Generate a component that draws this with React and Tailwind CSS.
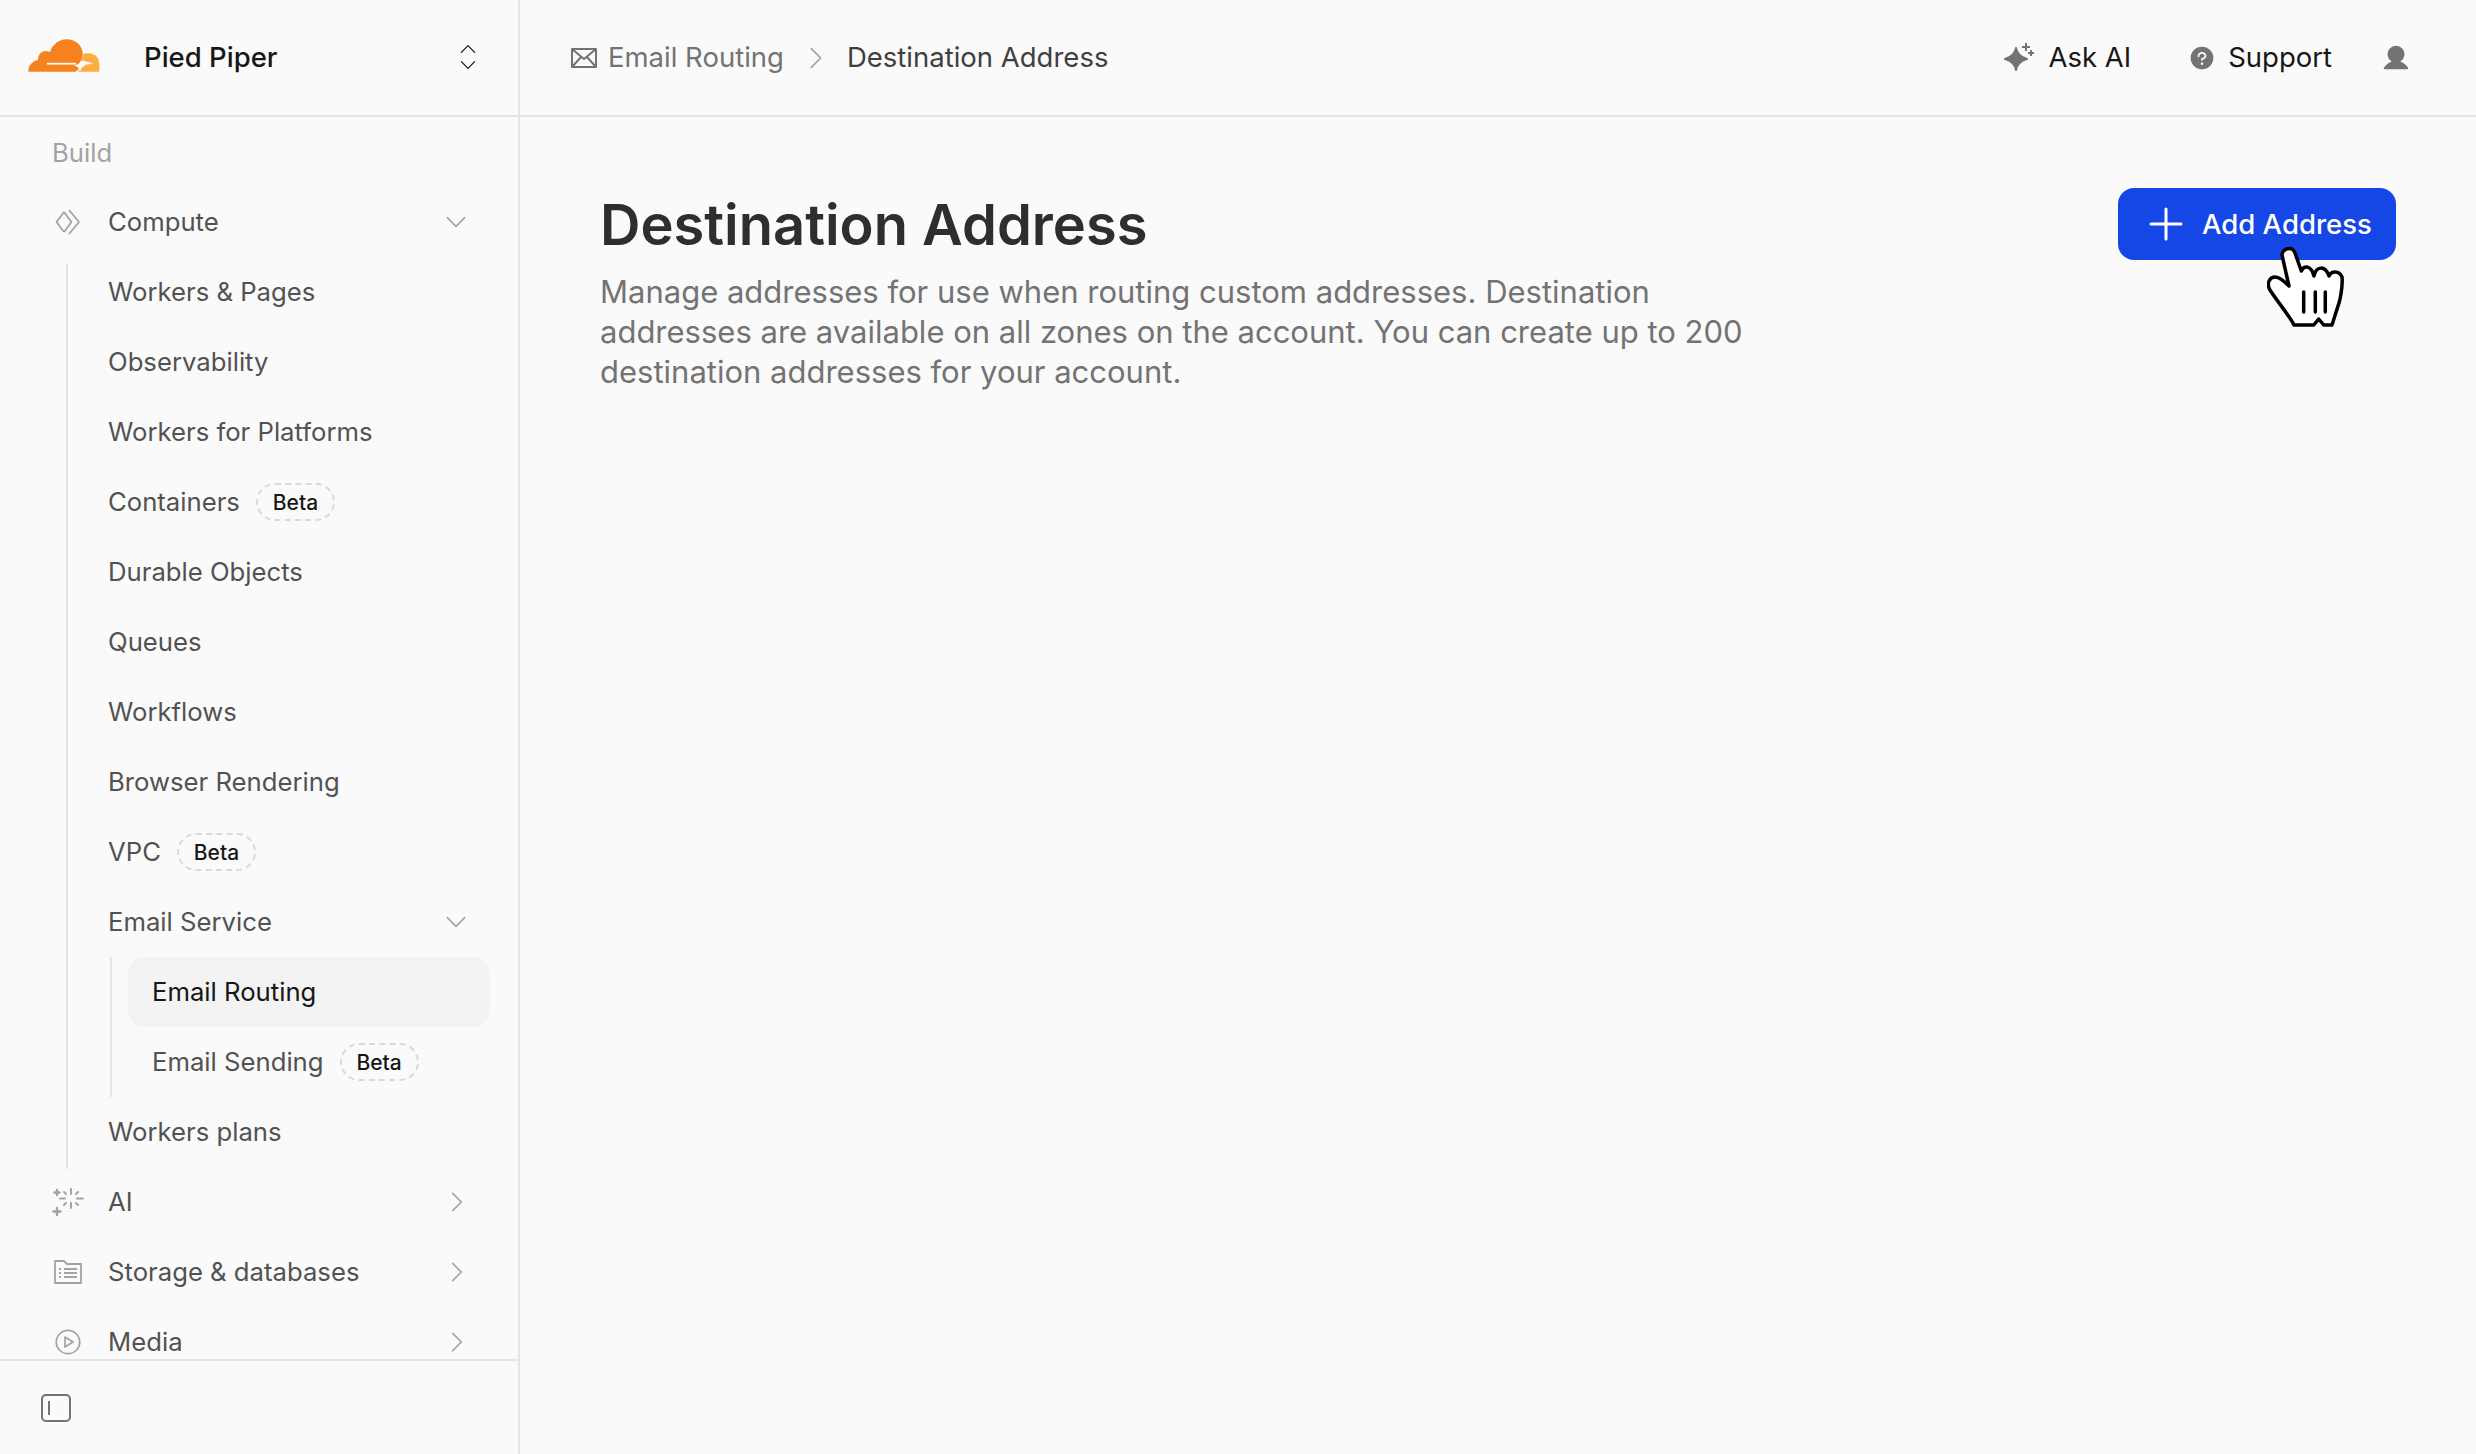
import React from "react";
import { PiQuestionFill, PiUserFill } from "react-icons/pi";

const CloudLogo = () => (
  <svg className="w-[72px] h-[33px] shrink-0 -mt-[5px]" viewBox="0 0 72 33">
    <path
      fill="#f6821f"
      d="M0.300 32.700C0.300 27 4 22 10 21C9.500 15 15 9.500 22 13C24.500 5.500 31 0.300 38.700 0.300C47 0.300 54 6 54.700 14C55 17 54.500 19 53.700 21L52 27L50 30.500C49 32 48 32.700 47 32.700z"
    />
    <path
      fill="#fbad41"
      d="M50.300 32.700C51 29 52 27 54.700 26.300C58 25.500 62 25.500 65 24.300C61 22.800 57 22.500 53.700 21.300C55 19 55.500 17 55.300 15.300C56 14.800 57 14.300 62 14.300C67 15 71.300 19 71.300 25V32.700z"
    />
    <path d="M19 24.700H48" stroke="#fafafa" strokeWidth="1.800" fill="none" />
    <path d="M53 20C53 24 55 26 58 26.500C55 27 53 29 52 33C51.500 29 50 27.500 46 26.500C50 26 52.500 24 53 20z" fill="#fafafa" />
  </svg>
);

const Caret = ({ dir = "down", className = "" }) => {
  const pts = {
    down: "4,8 12,16 20,8",
    right: "8,4 16,12 8,20",
    up: "4,16 12,8 20,16",
  };
  return (
    <svg className={className} viewBox="0 0 24 24" fill="none" stroke="currentColor" strokeWidth="1.500" strokeLinecap="round" strokeLinejoin="round">
      <polyline points={pts[dir]} />
    </svg>
  );
};

const ComputeIcon = () => (
  <svg className="w-[26px] h-[26px]" viewBox="0 0 26 26" fill="none" stroke="#a3a3a3" strokeWidth="1.800" strokeLinejoin="round">
    <path d="M9 3 L1.500 13 L9 23" />
    <path d="M9 3 L16.500 13 L9 23" />
    <path d="M14 1 L24 13 L14 25" />
  </svg>
);

const AiIcon = () => (
  <svg className="w-[32px] h-[28px]" viewBox="0 0 32 28" fill="none" stroke="#a3a3a3" strokeWidth="2" strokeLinecap="round">
    <path d="M19 1v5M19 15v5M8 10.500h5M25 10.500h6M12 4l2 2M24 15l2 2M26 4l-2 2M14 15l-2 2" />
    <path d="M5 2v5M2.500 4.500h5M5 20v7M1.500 23.500h7" strokeWidth="2.400" />
  </svg>
);

const StorageIcon = () => (
  <svg className="w-[28px] h-[24px]" viewBox="0 0 28 24" fill="none" stroke="#a3a3a3" strokeWidth="1.800" strokeLinejoin="round">
    <path d="M1 1h9l3 3h14v19H1z" />
    <path d="M5 9h2M10 9h13M5 13h2M10 13h13M5 17h2M10 17h13" />
  </svg>
);

const MediaIcon = () => (
  <svg className="w-[26px] h-[26px]" viewBox="0 0 26 26" fill="none" stroke="#a3a3a3" strokeWidth="1.700" strokeLinejoin="round">
    <circle cx="13" cy="13" r="11.700" />
    <path d="M10 8l8 5-8 5z" />
  </svg>
);

const Beta = () => (
  <span className="inline-flex items-center justify-center w-[79px] h-[38px] pt-[2px] rounded-full border-2 border-dashed border-[#d9d9d9] text-[21px] font-medium text-[#171717]">
    Beta
  </span>
);

const NavRow = ({ icon, label, beta, caret, indent = "pl-[108px]" }) => (
  <div className={`flex items-center h-[70px] shrink-0 ${indent} pr-[48px] gap-[16px] text-[#525252]`}>
    {icon && <span className="flex justify-center -ml-[64px] w-[48px]">{icon}</span>}
    <span>{label}</span>
    {beta && <Beta />}
    {caret && (
      <Caret
        dir={caret}
        className={`ml-auto w-[26px] h-[26px] text-[#a3a3a3] ${caret === "down" ? "mr-[1px]" : ""}`}
      />
    )}
  </div>
);

const SideBar = () => (
  <aside className="flex flex-col w-[520px] h-full shrink-0 border-r-2 border-[#e5e5e5] text-[25.7px]">
    <div className="flex items-center h-[117px] shrink-0 border-b-2 border-[#e5e5e5] pl-[28px] pr-[40px]">
      <CloudLogo />
      <span className="ml-[44px] text-[27.5px] text-[#171717] font-medium">Pied Piper</span>
      <div className="ml-auto flex flex-col -mt-[2px] text-[#171717]">
        <Caret dir="up" className="w-[20px] h-[20px] -mb-[4px]" />
        <Caret dir="down" className="w-[20px] h-[20px]" />
      </div>
    </div>
    <nav className="flex-1 overflow-hidden flex flex-col font-normal">
      <div className="flex items-center h-[70px] shrink-0 pl-[52px] pt-[2px] text-[#a3a3a3]">Build</div>
      <NavRow icon={<ComputeIcon />} label="Compute" caret="down" />
      <div className="ml-[66px] mt-[7px] border-l-2 border-[#e5e5e5] pb-[2px] -mb-[2px]">
        <div className="-mt-[7px]">
          <NavRow label="Workers & Pages" indent="pl-[40px]" />
          <NavRow label="Observability" indent="pl-[40px]" />
          <NavRow label="Workers for Platforms" indent="pl-[40px]" />
          <NavRow label="Containers" beta indent="pl-[40px]" />
          <NavRow label="Durable Objects" indent="pl-[40px]" />
          <NavRow label="Queues" indent="pl-[40px]" />
          <NavRow label="Workflows" indent="pl-[40px]" />
          <NavRow label="Browser Rendering" indent="pl-[40px]" />
          <NavRow label="VPC" beta indent="pl-[40px]" />
          <NavRow label="Email Service" caret="down" indent="pl-[40px]" />
          <div className="ml-[42px] border-l-2 border-[#e5e5e5] pl-[16px] pr-[28px]">
            <div className="flex items-center h-[70px] rounded-[16px] bg-[#f3f3f3] pl-[24px] text-[#171717]">Email Routing</div>
            <div className="flex items-center h-[70px] pl-[24px] gap-[16px] text-[#525252]">
              <span>Email Sending</span>
              <Beta />
            </div>
          </div>
          <NavRow label="Workers plans" indent="pl-[40px]" />
        </div>
      </div>
      <NavRow icon={<AiIcon />} label="AI" caret="right" />
      <NavRow icon={<StorageIcon />} label="Storage & databases" caret="right" />
      <NavRow icon={<MediaIcon />} label="Media" caret="right" />
    </nav>
    <div className="flex items-center h-[95px] shrink-0 border-t-2 border-[#e5e5e5] pl-[41px]">
      <svg className="w-[30px] h-[28px]" viewBox="0 0 30 28" fill="none" stroke="#737373" strokeWidth="2">
        <rect x="1" y="1" width="28" height="26" rx="4" />
        <path d="M8 7v14" />
      </svg>
    </div>
  </aside>
);

const Header = () => (
  <header className="flex items-center h-[117px] shrink-0 border-b-2 border-[#e5e5e5] pl-[51px] pr-[65px] text-[27.5px]">
    <svg className="w-[26px] h-[20px]" viewBox="0 0 26 20" fill="none" stroke="#737373" strokeWidth="2" strokeLinejoin="round">
      <rect x="1" y="1" width="24" height="18" />
      <path d="M1 1l12 10L25 1M1 19l9-10M25 19l-9-10" />
    </svg>
    <span className="ml-[11px] text-[#737373]">Email Routing</span>
    <Caret dir="right" className="ml-[18px] w-[28px] h-[28px] text-[#a3a3a3]" />
    <span className="ml-[17px] text-[#404040]">Destination Address</span>
    <div className="ml-auto flex items-center text-[#171717]">
      <svg className="w-[30px] h-[30px]" viewBox="0 0 30 30" fill="#737373">
        <path d="M12 5c1 6 4 9 11 11-7 2-10 5-11 11-1-6-4-9-11-11 7-2 10-5 11-11z" stroke="#737373" strokeWidth="2" strokeLinejoin="round" />
        <path d="M21 0h2v3h3v2h-3v3h-2V5h-3V3h3zM26 7h2v2h2v2h-2v2h-2v-2h-2V9h2z" />
      </svg>
      <span className="ml-[14px]">Ask AI</span>
      <PiQuestionFill className="ml-[57px] w-[28px] h-[28px] text-[#737373]" />
      <span className="ml-[12px]">Support</span>
      <PiUserFill className="ml-[49px] w-[30px] h-[30px] text-[#737373]" />
    </div>
  </header>
);

const HandCursor = () => (
  <svg className="absolute left-[149px] top-[58px] w-[78px] h-[83px]" viewBox="0 0 78 83">
    <path
      fill="#fff"
      stroke="#000"
      strokeWidth="3.500"
      strokeLinejoin="round"
      d="M15 9C15 3 25-1 28 7L34.300 25C37 19 44 19 47 30C49 20 58 19 62 30C64 25 72 24 75 31C76 40 73 55 71 60L65 79H56.700L51.700 73L46.700 79H27C24 72 10 55 3 44C-1 37 3 31 8 31C13 31 18 36 22 40z"
    />
    <path d="M36.700 46v20M48.300 46v20M58.300 46v20" stroke="#000" strokeWidth="3.500" strokeLinecap="round" fill="none" />
  </svg>
);

export default function App() {
  return (
    <div className="flex w-[2476px] h-[1454px] overflow-hidden bg-[#fafafa] font-['Inter',sans-serif]">
      <SideBar />
      <main className="flex flex-col flex-1 min-w-0">
        <Header />
        <div className="flex items-start justify-between pl-[80px] pr-[80px] pt-[71px]">
          <div>
            <h1 className="pt-[1px] mb-[11px] text-[56px] leading-[72px] font-semibold text-[#2e2e2e]">Destination Address</h1>
            <p className="w-[1180px] text-[31px] leading-[40px] text-[#737373]">
              Manage addresses for use when routing custom addresses. Destination addresses are available on all zones on the account. You can create up to 200 destination addresses for your account.
            </p>
          </div>
          <div className="relative">
            <button className="flex items-center w-[278px] h-[72px] rounded-[16px] bg-[#1447e6] pl-[31px] text-[27.5px] font-medium text-white">
              <svg className="w-[34px] h-[34px] shrink-0" viewBox="0 0 34 34" fill="none" stroke="#fff" strokeWidth="3" strokeLinecap="round">
                <path d="M17 2v30M2 17h30" />
              </svg>
              <span className="ml-[19px] pt-[1px]">Add Address</span>
            </button>
            <HandCursor />
          </div>
        </div>
      </main>
    </div>
  );
}
